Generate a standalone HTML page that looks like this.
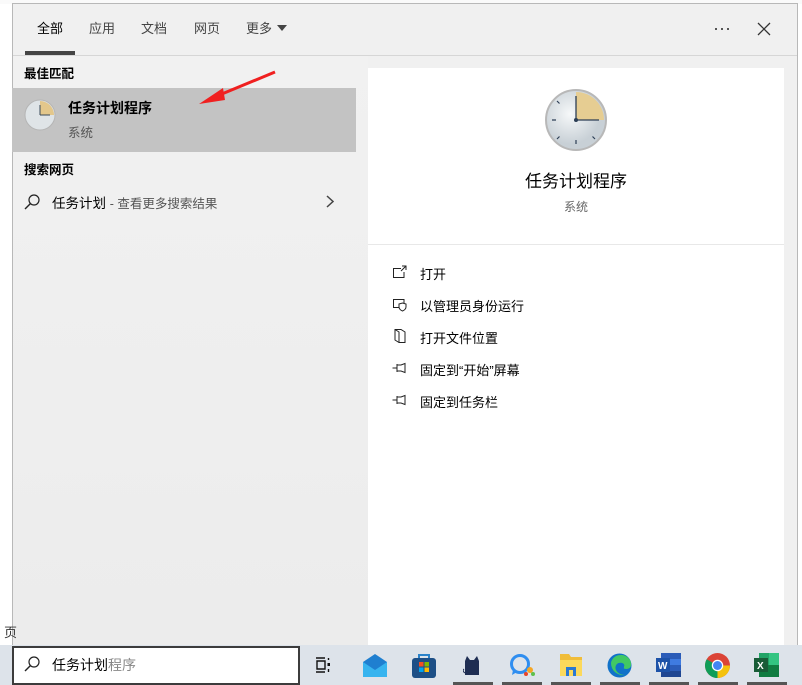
<!DOCTYPE html>
<html><head><meta charset="utf-8"><style>
*{margin:0;padding:0;box-sizing:border-box}
body{width:802px;height:685px;overflow:hidden;background:#fff;position:relative;font-family:"Liberation Sans","Noto Sans CJK SC",sans-serif;color:#000}
.a{position:absolute}
.t{font-size:13px;white-space:nowrap}
</style></head><body>
<div class="a" style="left:0;top:0;width:802px;height:4px;background:#fafafa"></div>
<div class="a" style="left:12px;top:3px;width:786px;height:645px;background:#f0f0f0;border:1px solid #b8b8b8;border-bottom:none"></div>
<div class="a" style="left:13px;top:56px;width:355px;height:590px;background:linear-gradient(#f1f1f1,#ececec)"></div>
<div class="a" style="left:0;top:620px;width:12px;height:25px;font-size:13px;color:#333;padding-left:4px;padding-top:2px">页</div>
<div class="a t" style="left:37px;top:18px;color:#000">全部</div>
<div class="a t" style="left:89px;top:18px;color:#444">应用</div>
<div class="a t" style="left:141px;top:18px;color:#444">文档</div>
<div class="a t" style="left:194px;top:18px;color:#444">网页</div>
<div class="a t" style="left:246px;top:18px;color:#444">更多</div>
<svg class="a" style="left:277px;top:25px" width="10" height="6"><path d="M0 0H10L5 6Z" fill="#444"/></svg>
<div class="a" style="left:25px;top:51px;width:50px;height:4px;background:#444"></div>
<div class="a" style="left:13px;top:55px;width:784px;height:1px;background:#d6d6d6"></div>
<div class="a" style="left:715px;top:28px;width:2px;height:2px;background:#555"></div>
<div class="a" style="left:721px;top:28px;width:2px;height:2px;background:#555"></div>
<div class="a" style="left:727px;top:28px;width:2px;height:2px;background:#555"></div>
<svg class="a" style="left:757px;top:22px" width="14" height="14"><path d="M1 1L13 13M13 1L1 13" stroke="#333" stroke-width="1.3"/></svg>
<div class="a t" style="left:24px;top:63px;font-weight:bold;font-size:12.5px">最佳匹配</div>
<div class="a" style="left:12px;top:88px;width:344px;height:64px;background:#c3c3c3"></div>
<svg class="a" style="left:24px;top:99px" width="32" height="32" viewBox="0 0 32 32"><circle cx="16" cy="16" r="15" fill="#dfe4e7" stroke="#b5b5b5"/><path d="M16 16V2A14 14 0 0 1 30 16Z" fill="#e3c78b"/><path d="M16 16H26M16 16V6" stroke="#3a4a5a" stroke-width="1"/></svg>
<div class="a t" style="left:68px;top:98px;font-weight:bold;font-size:14px">任务计划程序</div>
<div class="a t" style="left:68px;top:122px;color:#555;font-size:12.5px">系统</div>
<svg class="a" style="left:195px;top:68px" width="85" height="42"><path d="M80 4L22 28" stroke="#f02020" stroke-width="3"/><path d="M4 36L28 20L30 32Z" fill="#f02020"/></svg>
<div class="a t" style="left:24px;top:159px;font-weight:bold;font-size:12.5px">搜索网页</div>
<svg class="a" style="left:24px;top:194px" width="16" height="16"><circle cx="10" cy="6" r="5" fill="none" stroke="#222" stroke-width="1.2"/><path d="M6.5 9.5L1 15" stroke="#222" stroke-width="1.4"/></svg>
<div class="a t" style="left:52px;top:192px;font-size:13.5px">任务计划 <span style="color:#555;font-size:12.5px">- 查看更多搜索结果</span></div>
<svg class="a" style="left:326px;top:195px" width="8" height="13"><path d="M1 1L7 6.5L1 12" fill="none" stroke="#444" stroke-width="1.5"/></svg>
<div class="a" style="left:368px;top:68px;width:416px;height:577px;background:#fff"></div>
<svg class="a" style="left:544px;top:88px" width="64" height="64" viewBox="0 0 64 64"><defs><radialGradient id="g" cx="0.4" cy="0.4"><stop offset="0" stop-color="#f6f8f9"/><stop offset="1" stop-color="#c8d0d6"/></radialGradient></defs><circle cx="32" cy="32" r="30" fill="url(#g)" stroke="#b8b8b8" stroke-width="2"/><path d="M32 32V4A28 28 0 0 1 60 32Z" fill="#e6cd92"/><g stroke="#2c3e55" stroke-width="1.2"><path d="M32 56V52M8 32H12M13 13L15.5 15.5M51 51L48.5 48.5M13 51L15.5 48.5"/></g><path d="M32 32H55M32 32V8" stroke="#2c3e55" stroke-width="1.3"/><circle cx="32" cy="32" r="2" fill="#2c3e55"/></svg>
<div class="a" style="left:368px;top:167px;width:416px;text-align:center;font-size:17px">任务计划程序</div>
<div class="a" style="left:368px;top:198px;width:416px;text-align:center;font-size:12px;color:#666">系统</div>
<div class="a" style="left:368px;top:244px;width:416px;height:1px;background:#e8e8e8"></div>
<svg class="a" style="left:392px;top:264px" width="16" height="16" fill="none" stroke="#222" stroke-width="1"><path d="M9 4.5H1.5V13.5H12V8"/><path d="M10 2H14V6M14 2L9 7"/></svg>
<div class="a t" style="left:420px;top:264px">打开</div>
<svg class="a" style="left:392px;top:297px" width="16" height="16" fill="none" stroke="#222" stroke-width="1"><path d="M7 10.5H1.5V2.5H12V6"/><path d="M7 7L10.5 6L14 7V10C14 12 12 13.5 10.5 14C9 13.5 7 12 7 10Z"/></svg>
<div class="a t" style="left:420px;top:296px">以管理员身份运行</div>
<svg class="a" style="left:392px;top:328px" width="16" height="16" fill="none" stroke="#222" stroke-width="1"><path d="M3 1.5H9L13 4V14.5H7L3 12Z"/><path d="M3 1.5L7 4V14.5"/></svg>
<div class="a t" style="left:420px;top:328px">打开文件位置</div>
<svg class="a" style="left:392px;top:362px" width="16" height="12" fill="none" stroke="#222" stroke-width="1"><path d="M0.5 6H5M5 2V10M5 3H9L13 1.5V10.5L9 9H5"/></svg>
<div class="a t" style="left:420px;top:360px">固定到“开始”屏幕</div>
<svg class="a" style="left:392px;top:394px" width="16" height="12" fill="none" stroke="#222" stroke-width="1"><path d="M0.5 6H5M5 2V10M5 3H9L13 1.5V10.5L9 9H5"/></svg>
<div class="a t" style="left:420px;top:392px">固定到任务栏</div>
<div class="a" style="left:0;top:645px;width:802px;height:40px;background:#dde3ea"></div>
<div class="a" style="left:12px;top:646px;width:288px;height:39px;background:#fff;border:2px solid #3c3c3c"></div>
<svg class="a" style="left:24px;top:656px" width="16" height="16"><circle cx="10" cy="6" r="5" fill="none" stroke="#222" stroke-width="1.2"/><path d="M6.5 9.5L1 15" stroke="#222" stroke-width="1.4"/></svg>
<div class="a t" style="left:52px;top:655px;font-size:14px">任务计划<span style="color:#888">程序</span></div>
<svg class="a" style="left:315px;top:656px" width="16" height="18" fill="none" stroke="#111" stroke-width="1.4"><path d="M1 2H10M1 16H10M2 5H10V13H2Z"/><rect x="12.5" y="7" width="2.5" height="3" fill="#111" stroke="none"/><path d="M13.5 2V4M13.5 13V16"/></svg>
<svg class="a" style="left:363px;top:653px" width="24" height="24"><path d="M0 9L12 1L24 9V24H0Z" fill="#1f7fd0"/><path d="M0 9L12 17L24 9V24H0Z" fill="#37b4ef"/></svg>
<svg class="a" style="left:412px;top:653px" width="24" height="25"><path d="M7 5V2H17V5" fill="none" stroke="#2a82c9" stroke-width="2"/><rect x="0" y="5" width="24" height="20" rx="3" fill="#1d4f86"/><rect x="7" y="9" width="4.5" height="4.5" fill="#f25022"/><rect x="12.5" y="9" width="4.5" height="4.5" fill="#7fba00"/><rect x="7" y="14.5" width="4.5" height="4.5" fill="#00a4ef"/><rect x="12.5" y="14.5" width="4.5" height="4.5" fill="#ffb900"/></svg>
<svg class="a" style="left:463px;top:655px" width="18" height="20"><path d="M2 20V6L4 1L7 5H11L14 1L16 6V20Z" fill="#1e2d52"/><path d="M2 18Q-1 16 1 14" stroke="#1e2d52" fill="none"/></svg>
<svg class="a" style="left:509px;top:653px" width="26" height="24"><circle cx="11" cy="11" r="8.5" fill="none" stroke="#2f8ef0" stroke-width="3"/><path d="M4 17L3 22L8 19Z" fill="#2f8ef0"/><circle cx="21" cy="17" r="3" fill="#f5a623"/><circle cx="17" cy="21" r="2" fill="#e8452a"/><circle cx="24" cy="21" r="2" fill="#5ec04d"/></svg>
<svg class="a" style="left:560px;top:654px" width="22" height="22"><path d="M0 0H9L11 3H22V22H0Z" fill="#f0bd3a"/><rect x="0" y="6" width="22" height="16" fill="#fcd95b"/><rect x="6" y="13" width="10" height="9" fill="#2b78d1"/><rect x="9" y="16" width="4" height="6" fill="#fcd95b"/></svg>
<svg class="a" style="left:607px;top:653px" width="25" height="25"><circle cx="12.5" cy="12.5" r="12" fill="#1172c9"/><path d="M4 10A10 9 0 0 1 24 12C24 16 19 17 16 15C20 11 14 8 10 11C6 15 10 22 18 22A12 12 0 0 1 4 10Z" fill="#41c864"/><circle cx="13" cy="14" r="4" fill="#1172c9"/></svg>
<svg class="a" style="left:656px;top:653px" width="25" height="24"><rect x="5" y="0" width="20" height="24" fill="#2b5cb8"/><rect x="5" y="6" width="20" height="6" fill="#3f7be0"/><rect x="5" y="18" width="20" height="6" fill="#1f4692"/><rect x="0" y="5" width="14" height="14" fill="#1d52a8"/><text x="2" y="16" font-size="10" font-weight="bold" fill="#fff" font-family="Liberation Sans">W</text></svg>
<svg class="a" style="left:705px;top:653px" width="25" height="25" viewBox="0 0 24 24"><circle cx="12" cy="12" r="12" fill="#db4437"/><path d="M12 12L1.6 6A12 12 0 0 0 12 24Z" fill="#0f9d58"/><path d="M12 12H24A12 12 0 0 1 12 24Z" fill="#f4c20d"/><circle cx="12" cy="12" r="5.5" fill="#fff"/><circle cx="12" cy="12" r="4.3" fill="#4285f4"/></svg>
<svg class="a" style="left:754px;top:653px" width="25" height="24"><rect x="5" y="0" width="20" height="24" fill="#21a366"/><rect x="15" y="0" width="10" height="12" fill="#33c481"/><rect x="5" y="12" width="20" height="12" fill="#107c41"/><rect x="0" y="5" width="14" height="14" fill="#185c37"/><text x="3" y="16" font-size="10" font-weight="bold" fill="#fff" font-family="Liberation Sans">X</text></svg>
<div class="a" style="left:453px;top:682px;width:40px;height:3px;background:#555"></div>
<div class="a" style="left:502px;top:682px;width:40px;height:3px;background:#555"></div>
<div class="a" style="left:551px;top:682px;width:40px;height:3px;background:#555"></div>
<div class="a" style="left:600px;top:682px;width:40px;height:3px;background:#555"></div>
<div class="a" style="left:649px;top:682px;width:40px;height:3px;background:#555"></div>
<div class="a" style="left:698px;top:682px;width:40px;height:3px;background:#555"></div>
<div class="a" style="left:747px;top:682px;width:40px;height:3px;background:#555"></div>
</body></html>
